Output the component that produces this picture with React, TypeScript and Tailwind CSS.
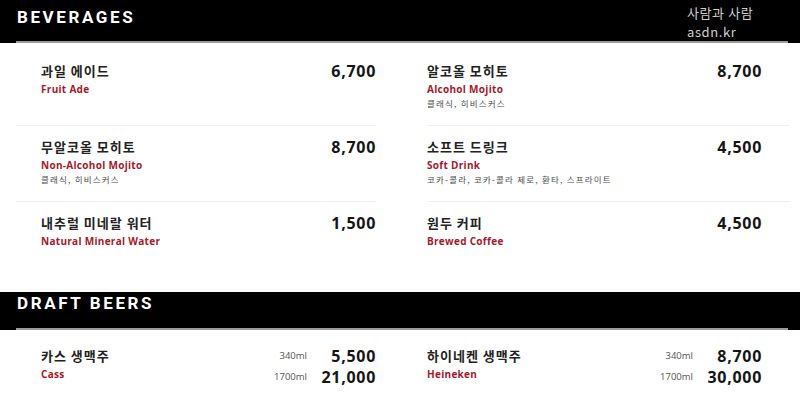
import React from "react";

type Item = { ko: string; en: string; price: string; desc?: string };

const LATIN = "font-['Open_Sans','Noto_Sans_CJK_KR',sans-serif]";
const KO = "font-['Noto_Sans_CJK_KR','Noto_Sans',sans-serif]";

const left: Item[] = [
  { ko: "과일 에이드", en: "Fruit Ade", price: "6,700" },
  { ko: "무알코올 모히토", en: "Non-Alcohol Mojito", price: "8,700", desc: "클래식, 히비스커스" },
  { ko: "내추럴 미네랄 워터", en: "Natural Mineral Water", price: "1,500" },
];
const right: Item[] = [
  { ko: "알코올 모히토", en: "Alcohol Mojito", price: "8,700", desc: "클래식, 히비스커스" },
  { ko: "소프트 드링크", en: "Soft Drink", price: "4,500", desc: "코카-콜라, 코카-콜라 제로, 환타, 스프라이트" },
  { ko: "원두 커피", en: "Brewed Coffee", price: "4,500" },
];

const NAME = `${KO} text-[13px] leading-[18px] font-semibold tracking-[1px] text-[#222]`;
const PRICE = `${LATIN} text-[16px] leading-[18px] font-bold tracking-[0.7px] text-[#151515]`;
const EN = `${LATIN} mt-[2px] text-[10px] leading-[14px] font-bold tracking-[0.3px] text-[#a3192c]`;
const DESC = `${KO} text-[8.5px] leading-[14px] tracking-[1.2px] text-[#4a4a4a]`;
const ML = `${LATIN} text-right text-[9.5px] text-[#555] leading-[18px]`;

function Row({ item, last, first, side }: { item: Item; last: boolean; first: boolean; side: "l" | "r" }) {
  return (
    <div
      className={`${first ? "pt-[11px] h-[75px]" : "pt-[12px] h-[76px]"} ${last ? "" : "border-b border-[#f0f0f0]"} ${side === "l" ? "pl-[25px]" : "pr-[28px]"}`}
    >
      <div className="flex items-center justify-between">
        <div className={NAME}>{item.ko}</div>
        <div className={PRICE}>{item.price}</div>
      </div>
      <div className={EN}>{item.en}</div>
      {item.desc && <div className={DESC}>{item.desc}</div>}
    </div>
  );
}

function Beer({ ko, en, p1, p2, side }: { ko: string; en: string; p1: string; p2: string; side: "l" | "r" }) {
  return (
    <div className={`flex justify-between pt-[17px] ${side === "l" ? "pl-[25px]" : "pr-[28px]"}`}>
      <div>
        <div className={NAME}>{ko}</div>
        <div className={EN}>{en}</div>
      </div>
      <div className="grid grid-cols-[auto_57px] gap-x-[12px] gap-y-[3px] items-center">
        <div className={ML}>340ml</div>
        <div className={`${PRICE} text-right`}>{p1}</div>
        <div className={ML}>1700ml</div>
        <div className={`${PRICE} text-right`}>{p2}</div>
      </div>
    </div>
  );
}

export default function App() {
  return (
    <div className="relative w-[800px] h-[408px] overflow-hidden bg-white">
      {/* Beverages header */}
      <div className="bg-black h-[43px] pl-4 pr-3">
        <div className="h-[43px] border-b-2 border-[#9a9a9a] pt-[7px]">
          <div className="font-['Roboto',sans-serif] font-bold text-[17px] leading-[20px] tracking-[2.6px] text-white pl-[1px]">
            BEVERAGES
          </div>
        </div>
      </div>
      <div className="absolute left-[687px] top-[3px] flex flex-col font-['Noto_Sans_CJK_KR',sans-serif] text-[13px] leading-[19px] tracking-[0.6px] text-[#cfcfcf]">
        <span>사람과 사람</span>
        <span>asdn.kr</span>
      </div>

      {/* Beverages body */}
      <div className="flex pl-4 pt-[8px] h-[249px]">
        <div className="w-[360px]">
          {left.map((it, i) => (
            <Row key={i} item={it} first={i === 0} last={i === left.length - 1} side="l" />
          ))}
        </div>
        <div className="w-[363px] ml-[51px]">
          {right.map((it, i) => (
            <Row key={i} item={it} first={i === 0} last={i === right.length - 1} side="r" />
          ))}
        </div>
      </div>

      {/* Draft beers header */}
      <div className="bg-black h-[38px] pl-4 pr-3">
        <div className="h-[38px] border-b-2 border-[#9a9a9a] pt-[1px]">
          <div className="font-['Roboto',sans-serif] font-bold text-[17px] leading-[20px] tracking-[2.6px] text-white pl-[1px]">
            DRAFT BEERS
          </div>
        </div>
      </div>

      <div className="flex pl-4">
        <div className="w-[360px]">
          <Beer ko="카스 생맥주" en="Cass" p1="5,500" p2="21,000" side="l" />
        </div>
        <div className="w-[363px] ml-[51px]">
          <Beer ko="하이네켄 생맥주" en="Heineken" p1="8,700" p2="30,000" side="r" />
        </div>
      </div>
    </div>
  );
}
